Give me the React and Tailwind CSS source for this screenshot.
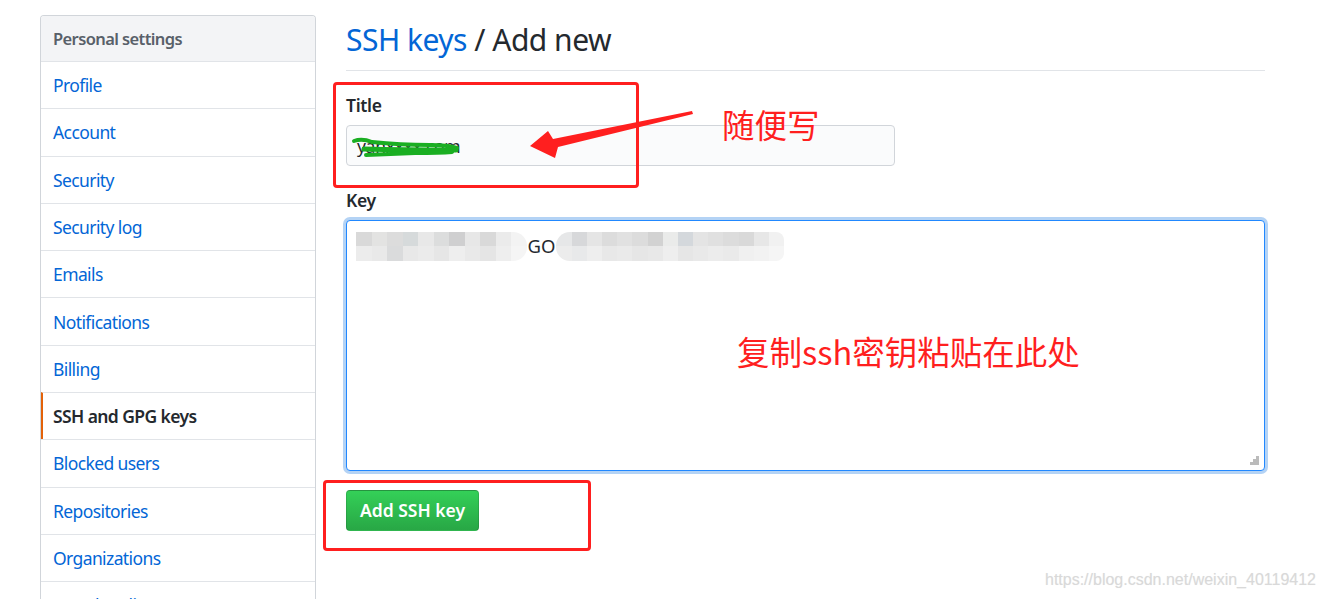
import React from 'react'

const navItems = [
  'Profile',
  'Account',
  'Security',
  'Security log',
  'Emails',
  'Notifications',
  'Billing',
  'SSH and GPG keys',
  'Blocked users',
  'Repositories',
  'Organizations',
  'Saved replies',
]

// pixelated blur over the key text
const mosaicA = [
  ['#d9d9d9', '#e3e3e2', '#dcdcdc', '#d6dadb', '#e8e8e8', '#dcdddd', '#cfcfd0', '#e7e7e7', '#d9d9d9', '#ebebeb', '#f3f3f3'],
  ['#ececec', '#e9e9e9', '#dadbdc', '#e8e8e8', '#ebebeb', '#e6e6e6', '#eeeeee', '#e9e9e9', '#e5e5e5', '#eeeeee', '#f5f5f5'],
]
const mosaicB = [
  ['#e6e7e8', '#d7d8da', '#e5e5e5', '#dcdcdc', '#e1e1e1', '#dcdcdc', '#d2d2d2', '#eaebea', '#d4d8dc', '#e4e4e4', '#e0e0e0', '#dcdcdc', '#d9d9d9', '#e7e7e7', '#f1f1f1'],
  ['#ececec', '#e8e9ea', '#eeeeee', '#e8e8e8', '#eaeaea', '#e6e6e6', '#e8e8e8', '#eeeeee', '#e6e6e6', '#e9e9e9', '#ececec', '#eaeaea', '#f0f0f0', '#f2f2f2', '#f5f5f5'],
]

function Mosaic({ rows, rounded, cell }) {
  return (
    <div className={`flex flex-col overflow-hidden ${rounded}`}>
      {rows.map((row, i) => (
        <div key={i} className="flex">
          {row.map((c, j) => (
            <div key={j} className={`${cell} h-[14.5px]`} style={{ backgroundColor: c }} />
          ))}
        </div>
      ))}
    </div>
  )
}

function Sidebar() {
  return (
    <nav className="w-[276px] shrink-0 border border-[#d1d5da] border-b-0 rounded-t-[4px] overflow-hidden">
      <div className="h-[45px] bg-[#f3f4f6] px-3 pt-[2px] flex items-center text-[16.5px] tracking-[-0.6px] font-semibold text-[#586069]">
        Personal settings
      </div>
      {navItems.map(item => {
        const active = item === 'SSH and GPG keys'
        return (
          <div
            key={item}
            className={`h-[47.3px] border-t border-[#e1e4e8] flex items-center text-[17.5px] tracking-[-0.6px] ${
              active
                ? 'pl-[10px] border-l-[2px] border-l-[#e36209] text-[#24292e] font-semibold'
                : 'pl-3 text-[#0366d6]'
            }`}
          >
            {item}
          </div>
        )
      })}
    </nav>
  )
}

function Annotations() {
  return (
    <>
      {/* red boxes */}
      <div className="absolute left-[333px] top-[82px] w-[306px] h-[106px] border-[3px] border-[#ff1f1f] rounded-[4px]" />
      <div className="absolute left-[323px] top-[480px] w-[268px] h-[71px] border-[3px] border-[#ff1f1f] rounded-[4px]" />

      {/* green scribble over the title value */}
      <svg className="absolute left-0 top-0 pointer-events-none" width="1326" height="599">
        <path d="M354 141 Q 362 138 372 142 Q 400 145 430 145 Q 448 145 457 148" stroke="#1aae22" strokeWidth="4" fill="none" strokeLinecap="round" />
        <path d="M364 149 Q 400 150 456 150" stroke="#1aae22" strokeWidth="5" fill="none" strokeLinecap="round" />
        <path d="M366 155 Q 390 154 415 153 Q 440 153 452 152" stroke="#1aae22" strokeWidth="4" fill="none" strokeLinecap="round" />
        {/* arrow */}
        <polygon
          points="530,146 548,131 553,139 692,111 693,114 558,147 555,158"
          fill="#ff1f1f"
        />
      </svg>

      <div className="absolute left-[722px] top-[104px] text-[32.5px] leading-[40px] text-[#ff1f1f] font-['Microsoft_YaHei','Noto_Sans_CJK_SC',sans-serif]">
        随便写
      </div>
      <div className="absolute left-[737px] top-[331px] text-[32.5px] leading-[40px] text-[#ff1f1f] font-['Microsoft_YaHei','Noto_Sans_CJK_SC',sans-serif]">
        复制ssh密钥粘贴在此处
      </div>

      <div className="absolute right-[10px] top-[570px] text-[16px] leading-[20px] text-[#d9d9d9] font-['Liberation_Sans',Arial,sans-serif] [text-shadow:0_0_1px_#eeeeee]">
        https://blog.csdn.net/weixin_40119412
      </div>
    </>
  )
}

export default function App() {
  return (
    <div className="relative w-[1326px] h-[599px] overflow-hidden bg-white font-['Noto_Sans','Noto_Sans_CJK_SC',sans-serif]">
      <div className="flex pl-[40px] pt-[15px] gap-[30px]">
        <Sidebar />

        <main className="w-[919px]">
          <h2 className="pt-[5px] pb-[10px] leading-[40px] text-[30px] tracking-[-0.5px] font-normal text-[#24292e] border-b border-[#e1e4e8]">
            <span className="text-[#0366d6]">SSH keys</span> / Add new
          </h2>

          <div className="mt-[24px]">
            <label className="block leading-[21px] text-[17.5px] tracking-[-0.3px] font-semibold text-[#24292e]">Title</label>
            <div className="mt-[9px] w-[549px] h-[41px] bg-[#fafbfc] border border-[#d1d5da] rounded-[4px] px-[10px] pt-[2px] flex items-center text-[17.5px] tracking-[-0.3px] text-[#24292e]">
              yanxxxx.com
            </div>
          </div>

          <div className="mt-[24px]">
            <label className="block leading-[21px] text-[17.5px] tracking-[-0.3px] font-semibold text-[#24292e]">Key</label>
            <div className="relative mt-[9px] h-[251px] border border-[#2188ff] rounded-[4px] shadow-[0_0_0_3px_#b4d3f5] bg-white px-[9px] pt-[10px]">
              <div className="flex items-center">
                <Mosaic rows={mosaicA} rounded="rounded-r-[14px]" cell="w-[15.5px]" />
                <span className="pl-[1px] pr-[1px] text-[18.5px] text-[#24292e] leading-[30px]">GO</span>
                <Mosaic rows={mosaicB} rounded="rounded-l-[14px] rounded-r-[8px]" cell="w-[15.2px]" />
              </div>
              <svg className="absolute right-[4px] bottom-[4px]" width="10" height="10" viewBox="0 0 10 10">
                <rect x="6" y="0" width="3" height="3" fill="#bbbbbb" />
                <rect x="3" y="3" width="3" height="3" fill="#bbbbbb" />
                <rect x="6" y="3" width="3" height="3" fill="#bbbbbb" />
                <rect x="0" y="6" width="3" height="3" fill="#bbbbbb" />
                <rect x="3" y="6" width="3" height="3" fill="#bbbbbb" />
                <rect x="6" y="6" width="3" height="3" fill="#bbbbbb" />
              </svg>
            </div>
          </div>

          <button className="mt-[19px] h-[41px] px-[13px] rounded-[4px] border border-[#1b1f2326] bg-gradient-to-b from-[#34d058] to-[#28a745] text-white text-[17.5px] font-semibold">
            Add SSH key
          </button>
        </main>
      </div>

      <Annotations />
    </div>
  )
}
